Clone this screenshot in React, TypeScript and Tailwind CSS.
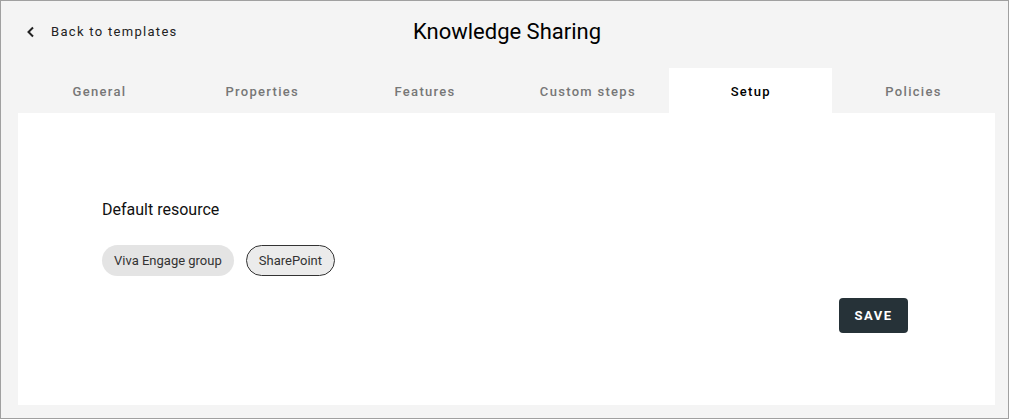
import React from "react";

const tabs = ["General", "Properties", "Features", "Custom steps", "Setup", "Policies"];

const App = () => {
    return (
        <div className="w-[1009px] h-[419px] border border-[#a0a0a0] bg-[#f4f4f4] flex flex-col font-['Roboto',sans-serif] overflow-hidden">
            {/* header */}
            <div className="relative h-[67px] flex items-center pb-[6px]">
                <button className="flex items-center gap-[15px] pl-[25px] text-[13px] tracking-[1.3px] text-[#222]">
                    <svg width="10" height="12" viewBox="0 0 10 12" fill="none" stroke="#222" strokeWidth="2">
                        <path d="M7 1.5 L2.5 6 L7 10.5" />
                    </svg>
                    Back to templates
                </button>
                <h1 className="absolute left-[5px] right-0 text-center text-[22px] text-black pointer-events-none">Knowledge Sharing</h1>
            </div>

            {/* tabs */}
            <div className="flex ml-[17px] mr-[13px] h-[45px]">
                {tabs.map((t) => (
                    <div
                        key={t}
                        className={
                            t === "Setup"
                                ? "flex-1 flex items-center justify-center pt-[2px] bg-white text-[13px] font-medium tracking-[1.3px] text-black"
                                : "flex-1 flex items-center justify-center pt-[2px] text-[13px] font-medium tracking-[1.3px] text-[#777]"
                        }
                    >
                        {t}
                    </div>
                ))}
            </div>

            {/* panel */}
            <div className="ml-[17px] mr-[13px] mb-[13px] flex-1 bg-white flex flex-col pt-[87px] pl-[84px] pr-[87px]">
                <h2 className="text-[16px] leading-[20px] text-[#111]">Default resource</h2>
                <div className="flex gap-[12px] mt-[25px]">
                    <span className="h-[31px] px-[12px] rounded-full bg-[#e4e4e4] text-[13px] text-[#333] flex items-center">Viva Engage group</span>
                    <span className="h-[31px] px-[12px] rounded-full bg-[#ebebeb] border border-[#333] text-[13px] text-[#333] flex items-center">SharePoint</span>
                </div>
                <div className="flex justify-end mt-[22px]">
                    <button className="h-[35px] w-[69px] rounded-[4px] bg-[#263238] text-white text-[13px] font-bold tracking-[1.5px]">SAVE</button>
                </div>
            </div>
        </div>
    );
};

export default App;
